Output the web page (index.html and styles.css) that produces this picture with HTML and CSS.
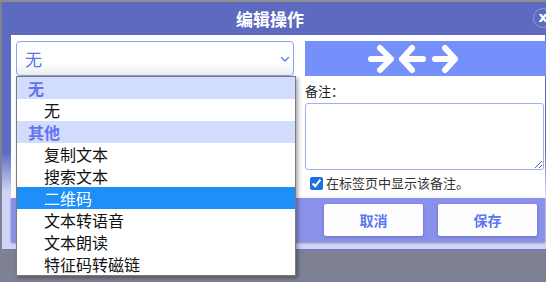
FILE: index.html
```html
<!DOCTYPE html>
<html lang="zh-CN">
<head>
<meta charset="utf-8">
<title>编辑操作</title>
<link rel="stylesheet" href="styles.css">
</head>
<body>
<div class="dialog">
  <div class="header">
    <div class="title">编辑操作</div>
    <div class="close">x</div>
  </div>
  <div class="panel">
    <div class="col-left">
      <div class="select">
        <span class="select-value">无</span>
        <svg class="chev" width="10" height="7" viewBox="0 0 10 7"><path d="M1.5 1.5 L5 5 L8.5 1.5" fill="none" stroke="#6b82f0" stroke-width="1.6" stroke-linecap="round" stroke-linejoin="round"/></svg>
      </div>
    </div>
    <div class="col-right">
      <div class="arrow-btn">
        <svg width="96" height="30" viewBox="0 0 96 30"><path d="M6 15 H26 M15 4 L26 15 L15 26 M37 15 H58 M47 4 L37 15 L47 26 M70 15 H90 M80 4 L90 15 L80 26" fill="none" stroke="#fff" stroke-width="6" stroke-linecap="round" stroke-linejoin="round"/></svg>
      </div>
      <div class="note-label">备注：</div>
      <textarea class="note"></textarea>
      <label class="check-row"><input type="checkbox" checked><span>在标签页中显示该备注。</span></label>
    </div>
  </div>
  <div class="footer">
    <button class="btn">取消</button>
    <button class="btn">保存</button>
  </div>
</div>
<ul class="dropdown">
  <li class="group">无</li>
  <li class="opt">无</li>
  <li class="group">其他</li>
  <li class="opt">复制文本</li>
  <li class="opt">搜索文本</li>
  <li class="opt selected">二维码</li>
  <li class="opt">文本转语音</li>
  <li class="opt">文本朗读</li>
  <li class="opt">特征码转磁链</li>
</ul>
</body>
</html>
```
FILE: styles.css
```css
html, body {
  margin: 0;
  padding: 0;
}
body {
  width: 546px;
  height: 282px;
  overflow: hidden;
  position: relative;
  padding-top: 2px;
  box-sizing: border-box;
  background: linear-gradient(#8d8d8d 0, #8d8d8d 2px, #7e8194 2px);
  font-family: "Noto Sans CJK SC", "Noto Sans", sans-serif;
}
.dialog {
  margin-left: 2px;
  width: 552px;
  height: 248px;
  box-sizing: border-box;
  border-bottom: 1px solid #6b78cf;
  background: linear-gradient(to bottom, #5c6bc0 0, #5c6bc0 150px, #d0d5f6 190px, #d0d5f6 100%);
  display: flex;
  flex-direction: column;
}
.header {
  height: 33px;
  display: flex;
  align-items: center;
  position: relative;
}
.title {
  width: 536px;
  text-align: center;
  color: #fff;
  font-weight: bold;
  font-size: 17px;
  line-height: 33px;
}
.close {
  width: 20px;
  height: 20px;
  box-sizing: border-box;
  border: 1px solid rgba(255,255,255,0.3);
  border-radius: 50%;
  color: #fff;
  font-weight: bold;
  font-size: 14px;
  line-height: 16px;
  text-align: center;
  font-family: "DejaVu Sans", sans-serif;
  margin-left: -5px;
  margin-top: -1px;
}
.panel {
  margin: 0 9px;
  height: 163px;
  background: #fff;
  display: flex;
  gap: 11px;
  padding: 6px 0 0 5px;
  box-sizing: border-box;
}
.col-left {
  width: 279px;
}
.select {
  height: 35px;
  box-sizing: border-box;
  border: 1px solid #8ea2f4;
  border-radius: 4px;
  background: linear-gradient(#fff 0, #fff 60%, #eeeeee 100%);
  display: flex;
  align-items: center;
  justify-content: space-between;
  padding: 0 3px 0 8px;
}
.select-value {
  color: #5b76ee;
  font-size: 17px;
  line-height: 20px;
}
.chev {
  margin-top: 2px;
}
.col-right {
  width: 240px;
  display: flex;
  flex-direction: column;
}
.arrow-btn {
  height: 35px;
  width: 250px;
  background: #7590fa;
  display: flex;
  align-items: center;
  padding-left: 60px;
  box-sizing: border-box;
}
.note-label {
  margin-top: 6px;
  font-size: 13px;
  line-height: 18px;
  color: #222;
}
.note {
  margin: 3px 0 0 0;
  width: 239px;
  height: 67px;
  box-sizing: border-box;
  border: 1px solid #9db0f6;
  border-radius: 3px;
  resize: both;
  padding: 2px;
  background: #fff;
}
.check-row {
  margin-top: 5px;
  display: flex;
  align-items: center;
  font-size: 13px;
  color: #333;
  line-height: 16px;
}
.check-row input {
  margin: 0 3px 0 5px;
  width: 13px;
  height: 13px;
  accent-color: #1a6fe6;
}
.footer {
  margin: 0 9px;
  height: 44px;
  background: #8a91ea;
  box-shadow: 0 1px 2px rgba(40,40,80,0.45);
  display: flex;
  justify-content: flex-end;
  align-items: center;
  gap: 15px;
  padding-right: 8px;
  box-sizing: border-box;
}
.btn {
  width: 99px;
  height: 32px;
  border: none;
  border-radius: 2px;
  background: #fdfdff;
  box-shadow: 0 1px 3px rgba(40,40,90,0.35);
  color: #5b76ee;
  font-weight: bold;
  font-size: 14px;
  font-family: "Noto Sans CJK SC", sans-serif;
  padding: 0;
}
.dropdown {
  position: absolute;
  left: 16px;
  top: 76px;
  width: 280px;
  margin: 0;
  padding: 0;
  list-style: none;
  background: #fff;
  border: 1px solid #7a7a7a;
  box-sizing: border-box;
  box-shadow: 2px 2px 4px rgba(0,0,0,0.35);
  font-size: 16px;
}
.dropdown li {
  height: 22px;
  line-height: 22px;
  white-space: nowrap;
}
.group {
  background: #d2dcfc;
  color: #6474ee;
  font-weight: bold;
  padding-left: 11px;
}
.opt {
  color: #111;
  padding-left: 27px;
}
.opt.selected {
  background: #1e8ff8;
  color: #fff;
}
```
